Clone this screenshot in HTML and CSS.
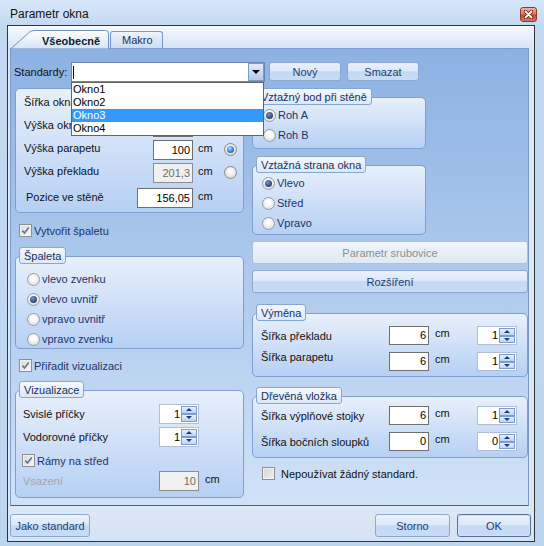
FILE: index.html
```html
<!DOCTYPE html>
<html lang="cs">
<head>
<meta charset="utf-8">
<title>Parametr okna</title>
<link rel="stylesheet" href="styles.css">
</head>
<body>
<div class="window">
  <div class="titlebar">
    <span class="title">Parametr okna</span>
    <div class="close"><svg width="11" height="9" viewBox="0 0 11 9"><path d="M2.5 1.5 L8.5 7.5 M8.5 1.5 L2.5 7.5" stroke="#5a1a10" stroke-width="3.2" stroke-linecap="round"/><path d="M2.5 1.5 L8.5 7.5 M8.5 1.5 L2.5 7.5" stroke="#ffffff" stroke-width="1.8" stroke-linecap="round"/></svg></div>
  </div>
  <div class="client">
    <div class="tabs">
      <div class="tab-active">
        <svg class="tab-shape" width="99" height="19" viewBox="0 0 99 19">
          <defs>
            <linearGradient id="tg" x1="0" y1="0" x2="0" y2="1">
              <stop offset="0" stop-color="#ffffff"/>
              <stop offset="1" stop-color="#d3e3f7"/>
            </linearGradient>
          </defs>
          <path d="M0.5 19 L19.5 2.2 Q21.5 0.5 24.5 0.5 L95.5 0.5 Q98.5 0.5 98.5 3.5 L98.5 19 Z" fill="url(#tg)" stroke="#7190c2"/>
        </svg>
        <span class="tab-label">Všeobecně</span>
      </div>
      <div class="tab">Makro</div>
    </div>
    <div class="page">
      <div class="stdrow">
        <span class="stdlabel">Standardy:</span>
        <div class="combo">
          <span class="caret"></span>
          <div class="combo-btn"><span class="tri-down"></span></div>
          <div class="droplist">
            <div class="ditem">Okno1</div>
            <div class="ditem">Okno2</div>
            <div class="ditem sel">Okno3</div>
            <div class="ditem">Okno4</div>
          </div>
        </div>
        <div class="btn btn-std btn-novy">Nový</div>
        <div class="btn btn-std btn-smazat">Smazat</div>
      </div>
      <div class="cols">
        <div class="col col-left">
          <div class="group g1">
            <div class="frow"><span class="flabel">Šířka okna</span><div class="inp"></div><span class="cm">cm</span><span class="radio w7"></span></div>
            <div class="frow"><span class="flabel">Výška okna</span><div class="inp"></div><span class="cm">cm</span><span class="radio w7"></span></div>
            <div class="frow"><span class="flabel">Výška parapetu</span><div class="inp">100</div><span class="cm">cm</span><span class="radio w7 on"></span></div>
            <div class="frow"><span class="flabel">Výška překladu</span><div class="inp dis">201,3</div><span class="cm">cm</span><span class="radio w7"></span></div>
            <div class="frow frow-last"><span class="flabel flabel-poz">Pozice ve stěně</span><div class="inp inp-wide">156,05</div><span class="cm">cm</span></div>
          </div>
          <div class="cbrow cbrow-l1"><span class="cb"><svg width="9" height="9" viewBox="0 0 9 9"><path d="M1.3 4.6 L3.5 7 L7.8 1.6" fill="none" stroke="#6a7488" stroke-width="1.6"/></svg></span><span>Vytvořit špaletu</span></div>
          <div class="gwrap gw-spaleta">
            <span class="legend">Špaleta</span>
            <div class="group g-spaleta">
              <div class="rrow"><span class="radio"></span><span>vlevo zvenku</span></div>
              <div class="rrow"><span class="radio on"></span><span>vlevo uvnitř</span></div>
              <div class="rrow"><span class="radio"></span><span>vpravo uvnitř</span></div>
              <div class="rrow"><span class="radio"></span><span>vpravo zvenku</span></div>
            </div>
          </div>
          <div class="cbrow cbrow-l2"><span class="cb"><svg width="9" height="9" viewBox="0 0 9 9"><path d="M1.3 4.6 L3.5 7 L7.8 1.6" fill="none" stroke="#6a7488" stroke-width="1.6"/></svg></span><span>Přiřadit vizualizaci</span></div>
          <div class="gwrap gw-viz">
            <span class="legend">Vizualizace</span>
            <div class="group g-viz">
              <div class="vrow"><span class="vlabel">Svislé příčky</span><div class="spin"><span class="sval">1</span><span class="sbtns"><span class="sb"><i class="up"></i></span><span class="sb"><i class="dn"></i></span></span></div></div>
              <div class="vrow"><span class="vlabel">Vodorovné příčky</span><div class="spin"><span class="sval">1</span><span class="sbtns"><span class="sb"><i class="up"></i></span><span class="sb"><i class="dn"></i></span></span></div></div>
              <div class="cbrow cbrow-ramy"><span class="cb"><svg width="9" height="9" viewBox="0 0 9 9"><path d="M1.3 4.6 L3.5 7 L7.8 1.6" fill="none" stroke="#6a7488" stroke-width="1.6"/></svg></span><span>Rámy na střed</span></div>
              <div class="vrow vrow-vs"><span class="vlabel grey">Vsazení</span><div class="inp dis">10</div><span class="cm cm-vs">cm</span></div>
            </div>
          </div>
        </div>
        <div class="col col-right">
          <div class="gwrap">
            <span class="legend">Vztažný bod při stěně</span>
            <div class="group narrow g-bod">
              <div class="rrow"><span class="radio on"></span><span>Roh A</span></div>
              <div class="rrow"><span class="radio"></span><span>Roh B</span></div>
            </div>
          </div>
          <div class="gwrap gw-strana">
            <span class="legend">Vztažná strana okna</span>
            <div class="group narrow g-strana">
              <div class="rrow"><span class="radio on"></span><span>Vlevo</span></div>
              <div class="rrow"><span class="radio"></span><span>Střed</span></div>
              <div class="rrow"><span class="radio"></span><span>Vpravo</span></div>
            </div>
          </div>
          <div class="btn btn-wide btn-disabled">Parametr srubovice</div>
          <div class="btn btn-wide">Rozšíření</div>
          <div class="gwrap gw-vymena">
            <span class="legend">Výměna</span>
            <div class="group g-vymena">
              <div class="xrow"><span class="xlabel">Šířka překladu</span><div class="inp inp-r">6</div><span class="cm cm-r">cm</span><div class="spin spin-r"><span class="sval">1</span><span class="sbtns"><span class="sb"><i class="up"></i></span><span class="sb"><i class="dn"></i></span></span></div></div>
              <div class="xrow"><span class="xlabel xlabel-up">Šířka parapetu</span><div class="inp inp-r">6</div><span class="cm cm-r">cm</span><div class="spin spin-r"><span class="sval">1</span><span class="sbtns"><span class="sb"><i class="up"></i></span><span class="sb"><i class="dn"></i></span></span></div></div>
            </div>
          </div>
          <div class="gwrap gw-vlozka">
            <span class="legend">Dřevěná vložka</span>
            <div class="group g-vlozka">
              <div class="xrow"><span class="xlabel">Šířka výplňové stojky</span><div class="inp inp-r">6</div><span class="cm cm-r">cm</span><div class="spin spin-r"><span class="sval">1</span><span class="sbtns"><span class="sb"><i class="up"></i></span><span class="sb"><i class="dn"></i></span></span></div></div>
              <div class="xrow"><span class="xlabel">Šířka bočních sloupků</span><div class="inp inp-r">0</div><span class="cm cm-r">cm</span><div class="spin spin-r"><span class="sval">0</span><span class="sbtns"><span class="sb"><i class="up"></i></span><span class="sb"><i class="dn"></i></span></span></div></div>
            </div>
          </div>
          <div class="cbrow cbrow-nep"><span class="cb cb-empty"></span><span class="nep-text">Nepoužívat žádný standard.</span></div>
        </div>
      </div>
    </div>
    <div class="footer">
      <div class="btn btn-jako">Jako standard</div>
      <div class="spacer"></div>
      <div class="btn btn-storno">Storno</div>
      <div class="btn btn-ok">OK</div>
    </div>
  </div>
</div>
</body>
</html>
```

FILE: styles.css
```css
* { box-sizing: border-box; }
html, body { margin: 0; padding: 0; }
body {
  width: 544px; height: 546px; overflow: hidden;
  font-family: "Liberation Sans", Arial, sans-serif;
  font-size: 11px; color: #000;
  background: #bfd6f0;
}
.window {
  width: 544px; height: 546px;
  display: flex; flex-direction: column;
  background: linear-gradient(#d7e7f9, #c3d9f2 26px, #bdd4ef);
}
.titlebar { height: 25px; flex: none; display: flex; align-items: flex-start; padding-left: 10px; }
.title { font-size: 12px; line-height: 14px; margin-top: 7px; color: #111; }
.close {
  margin-left: auto; margin-right: 7px; margin-top: 7px;
  width: 17px; height: 15px;
  border: 1px solid #8a3a2a; border-radius: 3px;
  background: linear-gradient(#eeb4a4, #dc7f66 45%, #c8482c 55%, #d67a5e);
  display: flex; align-items: center; justify-content: center;
}
.client {
  margin-left: 7px; width: 528px; height: 517px; flex: none;
  border: 1px solid #343434;
  display: flex; flex-direction: column;
  background: #dce7f4;
}
.tabs {
  height: 22px; flex: none;
  display: flex; align-items: flex-end; padding-left: 2px;
  background: linear-gradient(#f6f9fd, #d8e5f6);
}
.tab-active {
  display: grid; width: 99px; height: 19px; margin-bottom: -1px;
  position: relative; z-index: 2;
}
.tab-active > * { grid-area: 1 / 1; }
.tab-label { font-weight: bold; padding-left: 32px; padding-top: 5px; line-height: 13px; color: #0e1a30; }
.tab {
  margin-left: 1px; width: 53px; height: 17px;
  border: 1px solid #7597cc; border-bottom: none; border-radius: 3px 3px 0 0;
  background: linear-gradient(#eef4fc, #cbdcf3);
  color: #1b2f5a; padding-left: 11px; padding-top: 2px; line-height: 13px;
}
.page {
  margin-left: 2px; width: 519px; height: 458px; flex: none;
  border: 1px solid #7b9bd0; border-bottom-color: #56606f;
  background: linear-gradient(#8cb1e3, #d0e2f7);
  padding: 13px 0 0 3px;
}
.stdrow { display: flex; align-items: center; height: 20px; }
.stdlabel { width: 57px; color: #111; }
.combo {
  position: relative; width: 194px; height: 20px;
  border: 1px solid #6a87b3; background: #fff;
  display: flex; align-items: center;
}
.caret { width: 1px; height: 13px; background: #000; margin-left: 1px; }
.combo-btn {
  margin-left: auto; width: 16px; height: 18px;
  border: 1px solid #7d9bc9;
  background: linear-gradient(#e2ecfa, #b2cbee);
  display: flex; align-items: center; justify-content: center;
}
.tri-down { width: 0; height: 0; border-left: 4px solid transparent; border-right: 4px solid transparent; border-top: 4px solid #000; }
.droplist {
  position: absolute; top: 19px; left: -1px; z-index: 10;
  width: 193px; height: 54px;
  border: 1px solid #646464; background: #fff;
}
.ditem { height: 13px; line-height: 13px; padding-left: 1px; color: #000; }
.ditem.sel { background: #3399ff; color: #fff; }

.btn {
  display: flex; align-items: center; justify-content: center;
  border: 1px solid #8ca7d0; border-radius: 3px;
  background: linear-gradient(#eaf2fc 0%, #dce9f9 45%, #c4d9f4 52%, #c9dcf5 100%);
  color: #1e3e74; flex: none;
}
.btn-std { height: 19px; width: 72px; align-self: flex-start; }
.btn-novy { margin-left: 4px; }
.btn-smazat { margin-left: 6px; }
.btn-wide { height: 23px; margin-top: 6px; }
.btn-disabled {
  background: linear-gradient(#f0f5fb, #dfe8f4);
  border-color: #afc1da; color: #8e8e8e;
}

.cols { display: flex; align-items: flex-start; gap: 8px; margin-top: 6px; margin-left: 1px; }
.col { display: flex; flex-direction: column; align-items: stretch; }
.col-left { width: 229px; }
.col-right { width: 276px; }

.group {
  border: 1px solid #7f9fd3; border-radius: 5px;
  background: linear-gradient(#e8f0fb, #b6d0f4);
}
.gwrap { display: flex; flex-direction: column; align-items: flex-start; }
.gwrap > .group { align-self: stretch; margin-top: -8px; }
.gwrap > .group.narrow { align-self: flex-start; width: 174px; }
.legend {
  position: relative; z-index: 1;
  display: flex; align-items: center;
  height: 17px; padding: 0 4px; margin-left: 4px;
  border: 1px solid #86a6d6; border-radius: 3px;
  background: linear-gradient(#f4f8fd, #dce8f8);
  color: #17305c;
}

.g1 { height: 125px; padding: 3px 0 4px 8px; }
.frow { display: flex; align-items: center; height: 23px; }
.frow-last { margin-top: 4px; height: 20px; }
.flabel { width: 129px; color: #111; margin-bottom: 3px; }
.flabel-poz { width: 111px; margin-left: 2px; margin-bottom: 2px; }
.inp {
  width: 40px; height: 20px; flex: none;
  border: 1px solid #6e6e6e; background: #fff;
  text-align: right; padding-right: 2px; line-height: 18px; color: #000;
}
.inp-wide { width: 56px; }
.inp.dis { background: #f0f0f0; border-color: #8d8d8d; color: #6d6d6d; }
.cm { width: 26px; margin-left: 5px; margin-bottom: 4px; color: #111; }

.radio {
  width: 13px; height: 13px; flex: none; border-radius: 50%;
  border: 1px solid #9a9c9f;
  background: radial-gradient(circle at 50% 40%, #ffffff 20%, #d6d8db 90%);
  display: flex; align-items: center; justify-content: center;
}
.radio.on::after {
  content: ""; width: 7px; height: 7px; border-radius: 50%;
  background: radial-gradient(circle at 40% 35%, #7f95c0, #28406e 70%);
}
.radio.w7 { border-color: #8a8a8a; background: radial-gradient(circle at 50% 40%, #fafafa 20%, #cfcfcf 95%); }
.radio.w7.on::after { background: radial-gradient(circle at 40% 35%, #b9e4ff, #2b83cf 55%, #0d4a8a); }

.cbrow { display: flex; align-items: center; height: 13px; gap: 2px; color: #1b3468; }
.cbrow-l1 { margin-top: 11px; padding-left: 4px; }
.cbrow-l2 { margin-top: 10px; padding-left: 4px; }
.cb {
  width: 13px; height: 13px; flex: none;
  border: 1px solid #8e8f8f;
  background: linear-gradient(135deg, #d8d9da, #f8f8f8);
  box-shadow: inset 0 0 0 1px #f2f2f2;
  display: flex; align-items: center; justify-content: center;
}
.cb-empty { background: linear-gradient(135deg, #d3d4d5, #f1f1f1); }

.gw-spaleta { margin-top: 10px; }
.g-spaleta { height: 93px; padding: 12px 0 0 11px; }
.rrow { display: flex; align-items: center; height: 20px; gap: 2px; color: #1b3468; }

.gw-viz { margin-top: 9px; }
.g-viz { height: 108px; padding: 11px 0 0 7px; }
.vrow { display: flex; align-items: center; height: 23px; }
.vlabel { width: 136px; color: #111; }
.vlabel.grey { color: #a6a6a6; }
.cbrow-ramy { margin-top: 6px; margin-left: -1px; }
.vrow-vs { margin-top: 4px; height: 20px; }
.cm-vs { margin-left: 6px; }

.spin {
  width: 40px; height: 20px; flex: none;
  border: 1px solid #b3bfd0; background: #fff;
  display: flex; padding: 1px;
}
.sval { flex: 1; text-align: right; line-height: 16px; padding-right: 1px; }
.sbtns { width: 16px; display: flex; flex-direction: column; }
.sb {
  flex: 1; border: 1px solid #7c9dd2;
  background: linear-gradient(#eaf1fb, #bcd3f1);
  display: flex; align-items: center; justify-content: center;
}
.up { width: 0; height: 0; border-left: 3px solid transparent; border-right: 3px solid transparent; border-bottom: 3px solid #1e3b73; }
.dn { width: 0; height: 0; border-left: 3px solid transparent; border-right: 3px solid transparent; border-top: 3px solid #1e3b73; }

.g-bod { height: 52px; padding: 7px 0 0 10px; }
.gw-strana { margin-top: 7px; }
.g-strana { height: 70px; padding: 7px 0 0 9px; }

.gw-vymena { margin-top: 11px; }
.g-vymena { height: 64px; padding: 12px 0 0 8px; }
.gw-vlozka { margin-top: 10px; }
.g-vlozka { height: 62px; padding: 9px 0 0 8px; }
.xrow { display: flex; align-items: center; height: 19px; margin-bottom: 7px; }
.xlabel { width: 128px; color: #111; }
.xlabel-up { margin-bottom: 9px; }
.inp-r { height: 19px; line-height: 17px; }
.cm-r { margin-left: 6px; width: 42px; margin-bottom: 6px; }
.spin-r { height: 19px; }
.spin-r .sval { line-height: 15px; }

.cbrow-nep { margin-top: 9px; padding-left: 10px; gap: 6px; }
.nep-text { color: #111; }

.footer { height: 35px; flex: none; display: flex; align-items: flex-start; padding: 8px 3px 0 2px; background: linear-gradient(#dde8f5, #d6e3f3); }
.footer .btn { height: 23px; }
.btn-jako { width: 80px; }
.spacer { flex: 1; }
.btn-storno { width: 75px; margin-right: 7px; }
.btn-ok { width: 74px; border-color: #55729f; box-shadow: inset 0 0 0 1px #cfe1f8; }
```
